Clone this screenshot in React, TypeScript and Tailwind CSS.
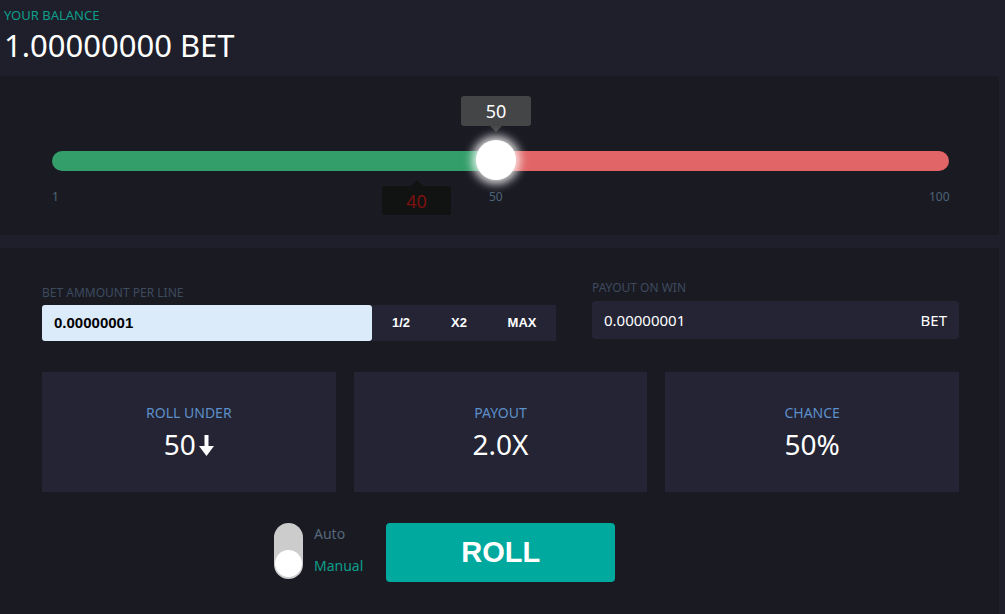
import React from "react";

const sans = { fontFamily: '"Noto Sans", "Open Sans", sans-serif' };

function Slider() {
  return (
    <div className="relative h-[159px] w-[999px] bg-[#1a1a23]">
      {/* track */}
      <div className="absolute left-[52px] top-[75px] flex h-[20px] w-[897px] overflow-hidden rounded-full">
        <div className="h-full w-[444px] bg-[#339e69]" />
        <div className="h-full flex-1 bg-[#e16566]" />
      </div>
      {/* value tooltip */}
      <div className="absolute left-[461px] top-[20px] flex h-[30px] w-[70px] items-center justify-center rounded-[3px] bg-[#444546] text-[18px] text-white">
        50
        <span className="absolute left-[29px] top-[30px] h-0 w-0 border-x-[6px] border-t-[6px] border-x-transparent border-t-[#444546]" />
      </div>
      {/* thumb */}
      <div className="absolute left-[476px] top-[64px] h-[40px] w-[40px] rounded-full bg-white shadow-[0_0_10px_4px_rgba(255,255,255,0.85)]" />
      {/* scale labels */}
      <span className="absolute left-[52px] top-[112px] text-[12px] text-[#4d6578]">1</span>
      <span className="absolute left-[489px] top-[112px] text-[12px] text-[#4d6578]">50</span>
      <span className="absolute left-[929px] top-[112px] text-[12px] text-[#4d6578]">100</span>
      {/* last result */}
      <div className="absolute left-[382px] top-[110px] flex h-[29px] w-[69px] items-center justify-center rounded-[3px] bg-[#111312] pt-[2px] text-[18px] text-[#7c1111]">
        40
        <span className="absolute left-[29px] top-[-6px] h-0 w-0 border-x-[6px] border-b-[6px] border-x-transparent border-b-[#111312]" />
      </div>
    </div>
  );
}

function StatCard({ label, value, arrow }: { label: string; value: string; arrow?: boolean }) {
  return (
    <div className="flex h-[120px] flex-1 flex-col items-center justify-center bg-[#242434]">
      <div className="text-[14px] leading-[18px] text-[#5d8fc9]">{label}</div>
      <div className="mt-[5px] flex items-center text-[28px] leading-[34px] text-white">
        {value}
        {arrow && (
          <svg width="15" height="23" viewBox="0 0 15 23" className="ml-[3px] mt-[4px]">
            <rect x="5.5" y="1" width="4" height="13" fill="white" />
            <path d="M0 12 L15 12 L7.5 22 Z" fill="white" />
          </svg>
        )}
      </div>
    </div>
  );
}

export default function App() {
  return (
    <div className="flex h-[614px] w-[1005px] flex-col overflow-hidden bg-[#1e1f2b]" style={sans}>
      <div className="h-[76px] px-[4px] pt-[6px]">
        <div className="text-[13px] leading-[18px] text-[#0f9e8a]">YOUR BALANCE</div>
        <div className="mt-[3px] text-[31px] leading-[36px] text-white">1.00000000 BET</div>
      </div>

      <Slider />

      <div className="mt-[13px] w-[999px] flex-1 bg-[#1a1a23] pl-[42px] pt-[33px]">
        <div className="flex items-start">
          <div className="w-[514px] pt-[5px]">
            <div className="text-[12px] leading-[14px] text-[#3d4b5e]">BET AMMOUNT PER LINE</div>
            <div className="mt-[5px] flex h-[36px]">
              <div
                className="flex w-[330px] items-center rounded-[3px] bg-[#dbebfa] pl-[12px] text-[15px] font-bold text-black"
                style={{ fontFamily: '"Liberation Sans", Arial, sans-serif' }}
              >
                0.00000001
              </div>
              <div
                className="flex flex-1 items-center bg-[#242434] text-[13px] font-bold text-white"
                style={{ fontFamily: '"Liberation Sans", Arial, sans-serif' }}
              >
                <span className="w-[58px] text-center">1/2</span>
                <span className="w-[58px] text-center">X2</span>
                <span className="w-[68px] text-center">MAX</span>
              </div>
            </div>
          </div>
          <div className="ml-[36px] w-[367px]">
            <div className="text-[12px] leading-[14px] text-[#3d4b5e]">PAYOUT ON WIN</div>
            <div className="mt-[6px] flex h-[38px] items-center justify-between rounded-[4px] bg-[#242434] px-[12px] text-[15px] text-white">
              <span>0.00000001</span>
              <span>BET</span>
            </div>
          </div>
        </div>

        <div className="mt-[31px] flex w-[917px] gap-[18px]">
          <StatCard label="ROLL UNDER" value="50" arrow />
          <StatCard label="PAYOUT" value="2.0X" />
          <StatCard label="CHANCE" value="50%" />
        </div>

        <div className="mt-[31px] flex items-start pl-[232px]">
          <div className="relative h-[56px] w-[29px] rounded-full bg-[#cccccc]">
            <div className="absolute bottom-[2px] left-[1px] h-[27px] w-[27px] rounded-full bg-white" />
          </div>
          <div className="ml-[11px] flex flex-col text-[14px] leading-[18px]">
            <span className="mt-[2px] text-[#56687a]">Auto</span>
            <span className="mt-[14px] text-[#0f9e8a]">Manual</span>
          </div>
          <button
            className="ml-[23px] flex h-[59px] w-[229px] items-center justify-center rounded-[4px] bg-[#00a99d] text-[29px] font-bold text-white"
            style={{ fontFamily: '"Liberation Sans", Arial, sans-serif' }}
          >
            ROLL
          </button>
        </div>
      </div>
    </div>
  );
}
